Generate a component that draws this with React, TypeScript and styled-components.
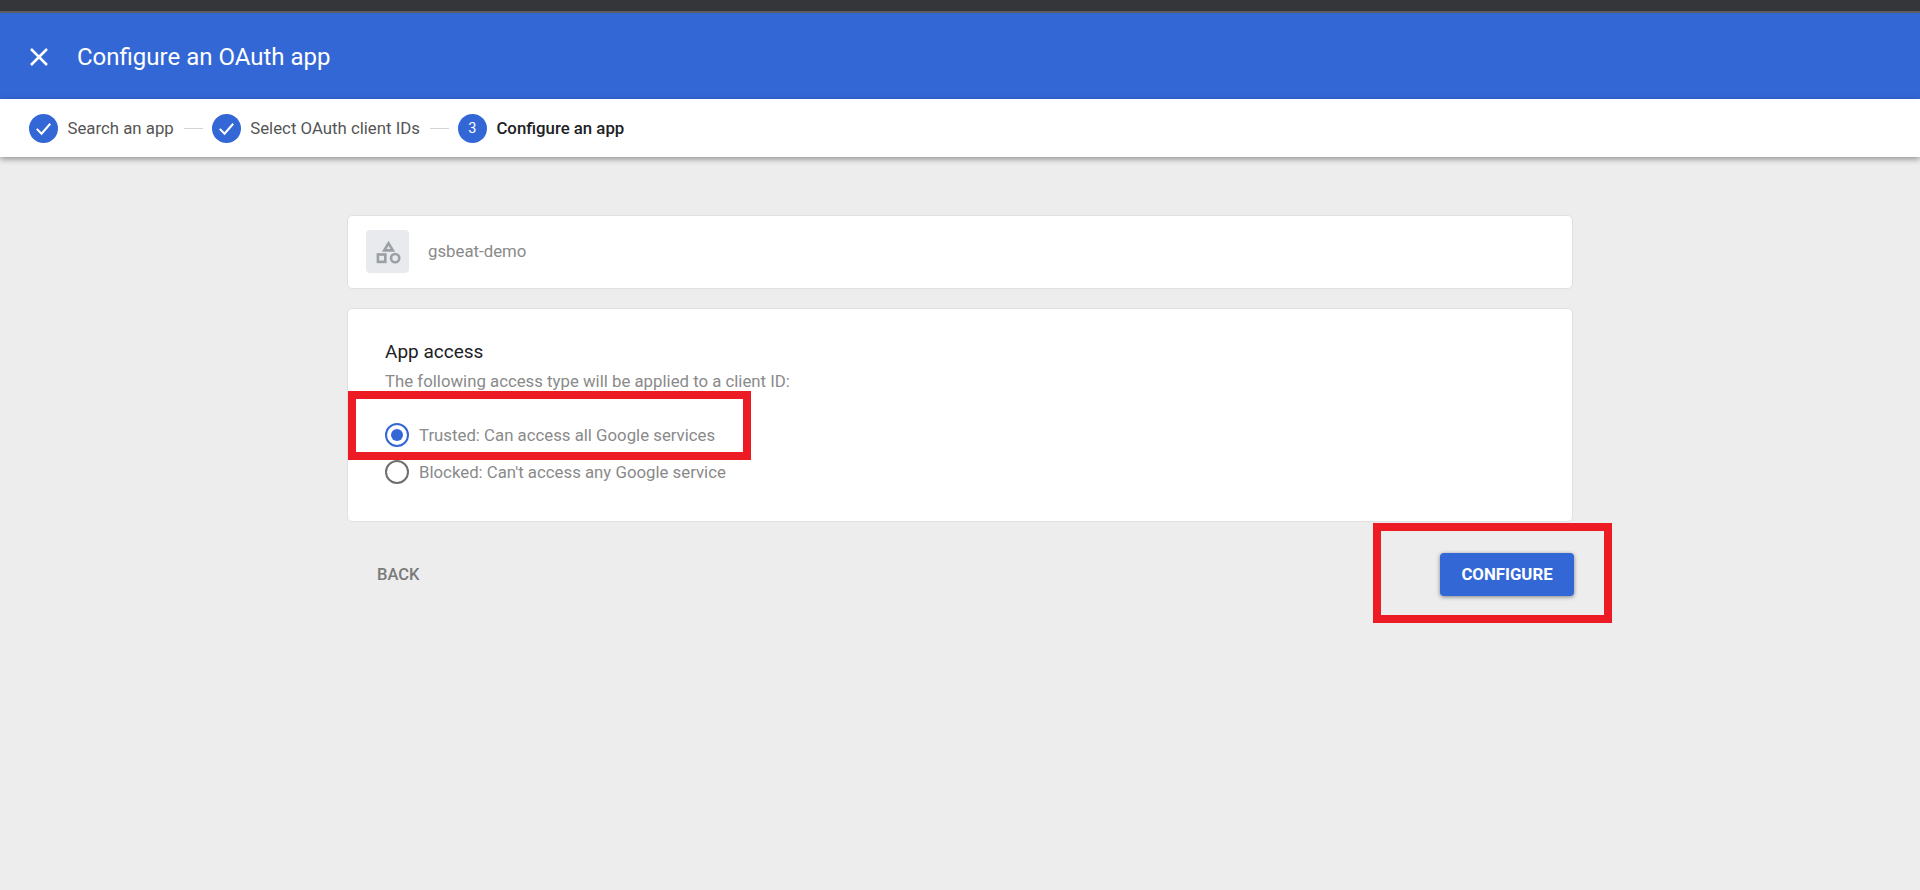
import { Fragment } from 'react'
import styled, { createGlobalStyle } from 'styled-components'

const GlobalStyle = createGlobalStyle`
  html, body {
    margin: 0;
    padding: 0;
    height: 100%;
    background: #ededed;
    font-family: Roboto, "Liberation Sans", sans-serif;
  }
`

const Page = styled.div`
  position: relative;
  width: 1920px;
  height: 890px;
  overflow: hidden;
  background: #ededed;
`

const BrowserEdge = styled.div`
  height: 11px;
  background: #35363a;
  border-bottom: 2px solid #5c5d61;
`

const TitleBar = styled.header`
  height: 86px;
  box-sizing: border-box;
  padding: 1px 0 0 28px;
  background: #3367d6;
  display: flex;
  align-items: center;
  gap: 27px;
  color: #fff;
`

const Title = styled.h1`
  margin: 0;
  font-size: 24px;
  font-weight: 400;
  line-height: 1;
`

const Stepper = styled.nav`
  height: 58px;
  background: #fff;
  display: flex;
  align-items: center;
  padding-left: 29px;
  box-shadow: 0 2px 6px rgba(0, 0, 0, 0.4);
  position: relative;
`

const StepCircle = styled.span`
  width: 29px;
  height: 29px;
  border-radius: 50%;
  background: #3367d6;
  color: #fff;
  display: flex;
  align-items: center;
  justify-content: center;
  font-size: 14.5px;
  font-weight: 400;
`

const StepLabel = styled.span<{ $active?: boolean }>`
  margin-left: 9.5px;
  font-size: 16.8px;
  color: ${({ $active }) => ($active ? '#202124' : '#555')};
  font-weight: ${({ $active }) => ($active ? 500 : 400)};
`

const StepLine = styled.span`
  width: 19px;
  height: 1px;
  background: #d5d5d5;
  margin: 0 9px 0 10px;
`

const Content = styled.main`
  width: 1226px;
  margin: 58px 0 0 347px;
  display: flex;
  flex-direction: column;
`

const Card = styled.section`
  box-sizing: border-box;
  background: #fff;
  border: 1px solid #e0e0e0;
  border-radius: 5px;
`

const AppCard = styled(Card)`
  height: 74px;
  display: flex;
  align-items: center;
  padding: 0 0 1px 18px;
  gap: 19px;
`

const AppIcon = styled.span`
  width: 43px;
  height: 43px;
  border-radius: 4px;
  background: #e8eaed;
  display: flex;
  align-items: center;
  justify-content: center;
`

const AppName = styled.span`
  padding-bottom: 2px;
  font-size: 16.8px;
  color: #8a8a8a;
`

const AccessCard = styled(Card)`
  margin-top: 19px;
  height: 214px;
  padding: 31px 37px 0;
`

const CardTitle = styled.h2`
  margin: 0;
  font-size: 19px;
  font-weight: 400;
  line-height: 24px;
  color: #202124;
`

const CardHint = styled.p`
  margin: 5px 0 23px;
  font-size: 16.8px;
  line-height: 24px;
  color: #8a8a8a;
`

const RadioRow = styled.label`
  height: 37px;
  display: flex;
  align-items: center;
  gap: 10px;
  font-size: 16.8px;
  color: #8a8a8a;
`

const RadioRing = styled.span<{ $checked?: boolean }>`
  width: 24px;
  height: 24px;
  box-sizing: border-box;
  border-radius: 50%;
  border: 2px solid ${({ $checked }) => ($checked ? '#3367d6' : '#6f6f6f')};
  display: flex;
  align-items: center;
  justify-content: center;
  &::after {
    content: '';
    display: ${({ $checked }) => ($checked ? 'block' : 'none')};
    width: 12px;
    height: 12px;
    border-radius: 50%;
    background: #3367d6;
  }
`

const Actions = styled.div`
  margin: 31px -1px 0 0;
  display: flex;
  align-items: center;
  justify-content: space-between;
`

const BackButton = styled.button`
  border: 0;
  background: none;
  padding: 0 30px;
  font: 500 16.5px Roboto, sans-serif;
  color: #7a7a7a;
`

const PrimaryButton = styled.button`
  width: 134px;
  height: 43px;
  padding: 0 0 2px;
  border: 0;
  border-radius: 4px;
  background: #3367d6;
  color: #fff;
  font: 700 16.8px Roboto, sans-serif;
  box-shadow: 0 1px 4px rgba(0, 0, 0, 0.45);
`

const Callout = styled.div<{ $left: number; $top: number; $width: number; $height: number }>`
  position: absolute;
  left: ${({ $left }) => $left}px;
  top: ${({ $top }) => $top}px;
  width: ${({ $width }) => $width}px;
  height: ${({ $height }) => $height}px;
  box-sizing: border-box;
  border: 8px solid #ed1c24;
`

const Check = () => (
  <svg width='19' height='19' viewBox='0 0 24 24' fill='none' stroke='#fff' strokeWidth='2.6'>
    <path d='M3.5 12.5 9.5 18.5 20.5 6' />
  </svg>
)

const steps = ['Search an app', 'Select OAuth client IDs']

export default function App() {
  return (
    <Page>
      <GlobalStyle />
      <BrowserEdge />
      <TitleBar>
        <svg width='22' height='22' viewBox='0 0 22 22' stroke='#fff' strokeWidth='2.5' fill='none'>
          <path d='M3 3 19 19M19 3 3 19' />
        </svg>
        <Title>Configure an OAuth app</Title>
      </TitleBar>
      <Stepper>
        {steps.map((step) => (
          <Fragment key={step}>
            <StepCircle>
              <Check />
            </StepCircle>
            <StepLabel>{step}</StepLabel>
            <StepLine />
          </Fragment>
        ))}
        <StepCircle>3</StepCircle>
        <StepLabel $active>Configure an app</StepLabel>
      </Stepper>
      <Content>
        <AppCard>
          <AppIcon>
            <svg width='26' height='26' viewBox='0 0 24 24' fill='none' stroke='#9aa0a6' strokeWidth='2.4'>
              <path d='M12.5 4 16.5 10.5H8.5Z' />
              <rect x='2.7' y='14.3' width='6.8' height='6.8' />
              <circle cx='18.6' cy='17.7' r='3.8' />
            </svg>
          </AppIcon>
          <AppName>gsbeat-demo</AppName>
        </AppCard>
        <AccessCard>
          <CardTitle>App access</CardTitle>
          <CardHint>The following access type will be applied to a client ID:</CardHint>
          <RadioRow>
            <RadioRing $checked />
            Trusted: Can access all Google services
          </RadioRow>
          <RadioRow>
            <RadioRing />
            Blocked: Can't access any Google service
          </RadioRow>
        </AccessCard>
        <Actions>
          <BackButton>BACK</BackButton>
          <PrimaryButton>CONFIGURE</PrimaryButton>
        </Actions>
      </Content>
      <Callout $left={348} $top={391} $width={403} $height={69} />
      <Callout $left={1373} $top={523} $width={239} $height={100} />
    </Page>
  )
}
